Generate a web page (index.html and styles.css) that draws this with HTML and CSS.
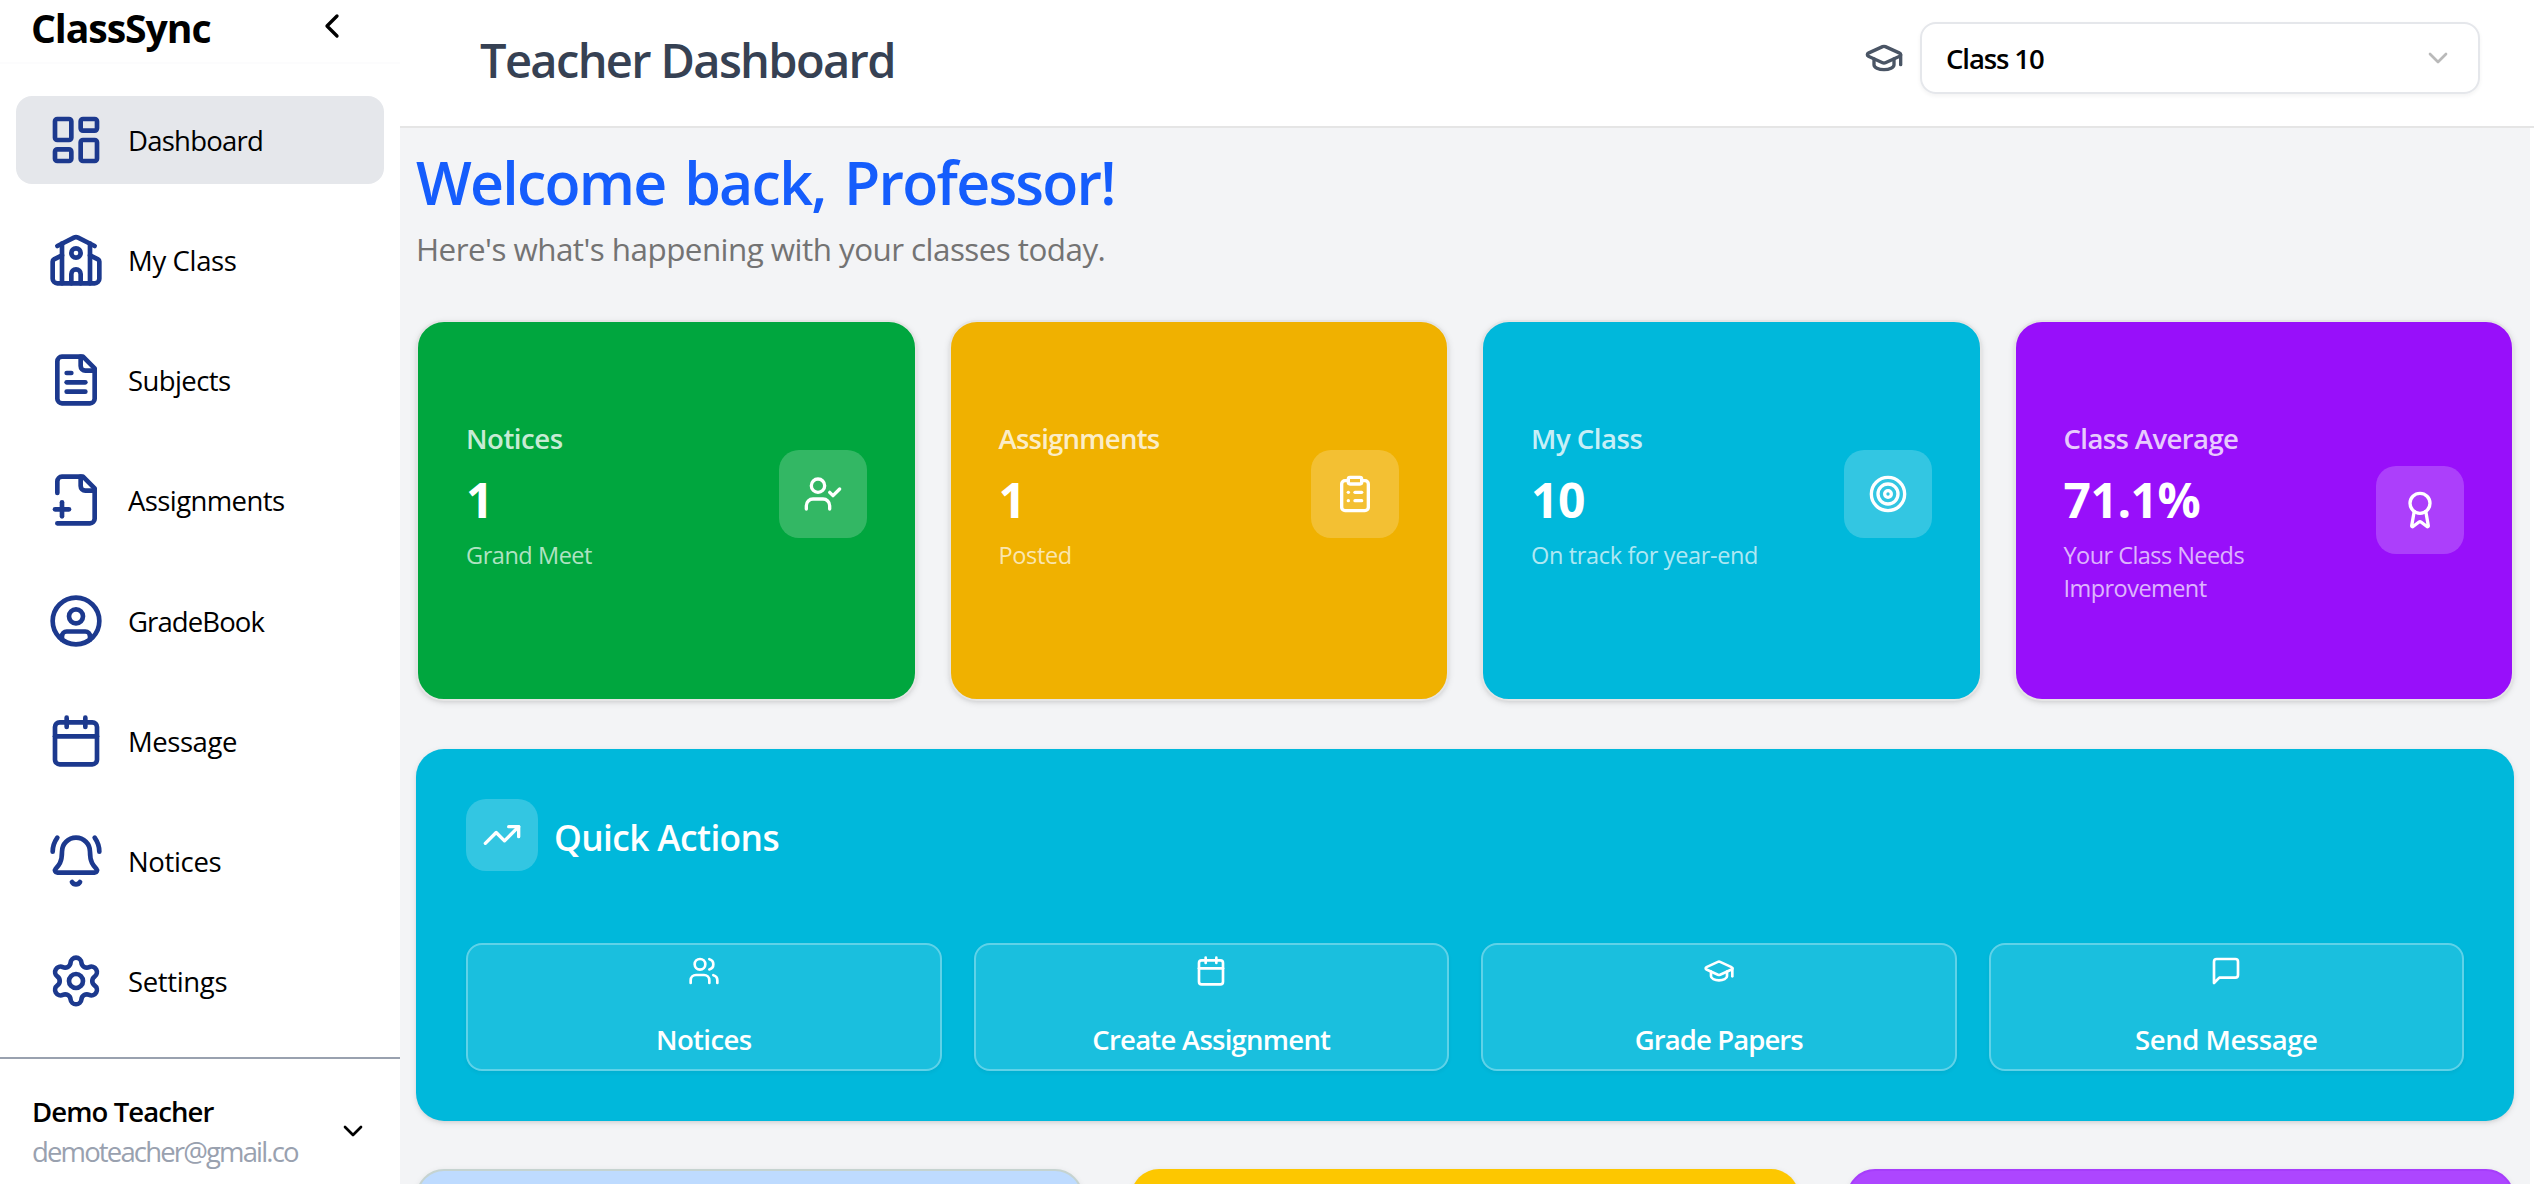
FILE: index.html
```
<!DOCTYPE html>
<html lang="en">
<head>
<meta charset="utf-8">
<title>ClassSync</title>
<link rel="stylesheet" href="styles.css">
</head>
<body>
<div class="app">
  <aside class="sidebar">
    <div class="brand">
      <span class="brand-name">ClassSync</span>
      <svg class="icon icon-40" viewBox="0 0 24 24"><path d="m15 18-6-6 6-6"/></svg>
    </div>
    <nav class="nav">
      <a class="nav-item active">
        <svg class="icon icon-56" viewBox="0 0 24 24"><rect width="7" height="9" x="3" y="3" rx="1"/><rect width="7" height="5" x="14" y="3" rx="1"/><rect width="7" height="9" x="14" y="12" rx="1"/><rect width="7" height="5" x="3" y="16" rx="1"/></svg>
        <span class="track-75">Dashboard</span>
      </a>
      <a class="nav-item">
        <svg class="icon icon-56" viewBox="0 0 24 24"><path d="M14 22v-4a2 2 0 1 0-4 0v4"/><path d="m18 10 3.447 1.724a1 1 0 0 1 .553.894V20a2 2 0 0 1-2 2H4a2 2 0 0 1-2-2v-7.382a1 1 0 0 1 .553-.894L6 10"/><path d="M18 5v17"/><path d="m4 6 7.106-3.553a2 2 0 0 1 1.788 0L20 6"/><path d="M6 5v17"/><circle cx="12" cy="9" r="2"/></svg>
        <span class="track-30">My Class</span>
      </a>
      <a class="nav-item">
        <svg class="icon icon-56" viewBox="0 0 24 24"><path d="M15 2H6a2 2 0 0 0-2 2v16a2 2 0 0 0 2 2h12a2 2 0 0 0 2-2V7Z"/><path d="M14 2v4a2 2 0 0 0 2 2h4"/><path d="M10 9H8"/><path d="M16 13H8"/><path d="M16 17H8"/></svg>
        <span class="track-60">Subjects</span>
      </a>
      <a class="nav-item">
        <svg class="icon icon-56" viewBox="0 0 24 24"><path d="M4 22h14a2 2 0 0 0 2-2V7l-5-5H6a2 2 0 0 0-2 2v5"/><path d="M14 2v4a2 2 0 0 0 2 2h4"/><path d="M3 16h6"/><path d="M6 13v6"/></svg>
        <span class="track-60">Assignments</span>
      </a>
      <a class="nav-item">
        <svg class="icon icon-56" viewBox="0 0 24 24"><path d="M18 20v-1.500a2 2 0 0 0-2-2H8a2 2 0 0 0-2 2V20"/><circle cx="12" cy="10" r="3"/><circle cx="12" cy="12" r="10"/></svg>
        <span class="track-90">GradeBook</span>
      </a>
      <a class="nav-item">
        <svg class="icon icon-56" viewBox="0 0 24 24"><path d="M8 2v4"/><path d="M16 2v4"/><rect width="18" height="18" x="3" y="4" rx="2"/><path d="M3 10h18"/></svg>
        <span class="track-45">Message</span>
      </a>
      <a class="nav-item">
        <svg class="icon icon-56" viewBox="0 0 24 24"><path d="M10.268 21a2 2 0 0 0 3.464 0"/><path d="M22 8c0-2.300-.8-4.300-2-6"/><path d="M3.262 15.326A1 1 0 0 0 4 17h16a1 1 0 0 0 .74-1.673C19.410 13.956 18 12.499 18 8A6 6 0 0 0 6 8c0 4.499-1.411 5.956-2.738 7.326"/><path d="M4 2C2.800 3.700 2 5.700 2 8"/></svg>
        <span class="track-30">Notices</span>
      </a>
      <a class="nav-item">
        <svg class="icon icon-56" viewBox="0 0 24 24"><path d="M9.671 4.136a2.340 2.340 0 0 1 4.659 0 2.340 2.340 0 0 0 3.319 1.915 2.340 2.340 0 0 1 2.330 4.033 2.340 2.340 0 0 0 0 3.831 2.340 2.340 0 0 1-2.330 4.033 2.340 2.340 0 0 0-3.319 1.915 2.340 2.340 0 0 1-4.659 0 2.340 2.340 0 0 0-3.320-1.915 2.340 2.340 0 0 1-2.330-4.033 2.340 2.340 0 0 0 0-3.831A2.340 2.340 0 0 1 6.350 6.051a2.340 2.340 0 0 0 3.319-1.915"/><circle cx="12" cy="12" r="3"/></svg>
        <span class="track-30">Settings</span>
      </a>
    </nav>
    <div class="account">
      <div class="account-text">
        <span class="account-name">Demo Teacher</span>
        <span class="account-email">demoteacher@gmail.co</span>
      </div>
      <svg class="icon icon-32" viewBox="0 0 24 24"><path d="m6 9 6 6 6-6"/></svg>
    </div>
  </aside>

  <div class="page">
    <header class="topbar">
      <h1 class="topbar-title">Teacher Dashboard</h1>
      <div class="class-picker">
        <svg class="icon icon-40 cap" viewBox="0 0 24 24"><path d="M21.420 10.922a1 1 0 0 0-.019-1.838L12.830 5.180a2 2 0 0 0-1.660 0L2.600 9.080a1 1 0 0 0 0 1.832l8.570 3.908a2 2 0 0 0 1.660 0z"/><path d="M22 10v6"/><path d="M6 12.500V16a6 3 0 0 0 12 0v-3.500"/></svg>
        <div class="select">
          <span class="select-value">Class 10</span>
          <svg class="icon icon-32 select-arrow" viewBox="0 0 24 24"><path d="m6 9 6 6 6-6"/></svg>
        </div>
      </div>
    </header>

    <main class="content">
      <h2 class="welcome">Welcome back, Professor!</h2>
      <p class="subtitle">Here's what's happening with your classes today.</p>

      <section class="stats">
        <article class="stat green">
          <div class="stat-text">
            <p class="stat-label track-45">Notices</p>
            <p class="stat-value">1</p>
            <p class="stat-note track-45">Grand Meet</p>
          </div>
          <div class="stat-icon"><svg class="icon icon-40" viewBox="0 0 24 24"><path d="m16 11 2 2 4-4"/><path d="M16 21v-2a4 4 0 0 0-4-4H6a4 4 0 0 0-4 4v2"/><circle cx="9" cy="7" r="4"/></svg></div>
        </article>
        <article class="stat yellow">
          <div class="stat-text">
            <p class="stat-label track-75">Assignments</p>
            <p class="stat-value">1</p>
            <p class="stat-note">Posted</p>
          </div>
          <div class="stat-icon"><svg class="icon icon-40" viewBox="0 0 24 24"><rect width="8" height="4" x="8" y="2" rx="1"/><path d="M16 4h2a2 2 0 0 1 2 2v14a2 2 0 0 1-2 2H6a2 2 0 0 1-2-2V6a2 2 0 0 1 2-2h2"/><path d="M12 11h4"/><path d="M12 16h4"/><path d="M8 11h.01"/><path d="M8 16h.01"/></svg></div>
        </article>
        <article class="stat cyan">
          <div class="stat-text">
            <p class="stat-label track-45">My Class</p>
            <p class="stat-value">10</p>
            <p class="stat-note">On track for year-end</p>
          </div>
          <div class="stat-icon"><svg class="icon icon-40" viewBox="0 0 24 24"><circle cx="12" cy="12" r="10"/><circle cx="12" cy="12" r="6"/><circle cx="12" cy="12" r="2"/></svg></div>
        </article>
        <article class="stat purple">
          <div class="stat-text">
            <p class="stat-label track-60">Class Average</p>
            <p class="stat-value">71.1%</p>
            <p class="stat-note track-60">Your Class Needs<br>Improvement</p>
          </div>
          <div class="stat-icon"><svg class="icon icon-40" viewBox="0 0 24 24"><path d="m15.477 12.890 1.515 8.526a.5.500 0 0 1-.810.470l-3.580-2.687a1 1 0 0 0-1.197 0l-3.586 2.686a.5.500 0 0 1-.810-.469l1.514-8.526"/><circle cx="12" cy="8" r="6"/></svg></div>
        </article>
      </section>

      <section class="quick">
        <div class="quick-head">
          <div class="quick-badge"><svg class="icon icon-40" viewBox="0 0 24 24"><path d="M16 7h6v6"/><path d="m22 7-8.500 8.500-5-5L2 17"/></svg></div>
          <h3 class="quick-title">Quick Actions</h3>
        </div>
        <div class="quick-grid">
          <button class="action">
            <svg class="icon icon-32" viewBox="0 0 24 24"><path d="M16 21v-2a4 4 0 0 0-4-4H6a4 4 0 0 0-4 4v2"/><path d="M16 3.128a4 4 0 0 1 0 7.744"/><path d="M22 21v-2a4 4 0 0 0-3-3.870"/><circle cx="9" cy="7" r="4"/></svg>
            <span class="track-60">Notices</span>
          </button>
          <button class="action">
            <svg class="icon icon-32" viewBox="0 0 24 24"><path d="M8 2v4"/><path d="M16 2v4"/><rect width="18" height="18" x="3" y="4" rx="2"/><path d="M3 10h18"/></svg>
            <span class="track-75">Create Assignment</span>
          </button>
          <button class="action">
            <svg class="icon icon-32" viewBox="0 0 24 24"><path d="M21.420 10.922a1 1 0 0 0-.019-1.838L12.830 5.180a2 2 0 0 0-1.660 0L2.600 9.080a1 1 0 0 0 0 1.832l8.570 3.908a2 2 0 0 0 1.660 0z"/><path d="M22 10v6"/><path d="M6 12.500V16a6 3 0 0 0 12 0v-3.500"/></svg>
            <span class="track-90">Grade Papers</span>
          </button>
          <button class="action">
            <svg class="icon icon-32" viewBox="0 0 24 24"><path d="M21 15a2 2 0 0 1-2 2H7l-4 4V5a2 2 0 0 1 2-2h14a2 2 0 0 1 2 2z"/></svg>
            <span class="track-45">Send Message</span>
          </button>
        </div>
      </section>

      <section class="panels">
        <div class="panel panel-blue"></div>
        <div class="panel panel-yellow"></div>
        <div class="panel panel-purple"></div>
      </section>
    </main>
  </div>
</div>
</body>
</html>
```
FILE: styles.css
```
* { box-sizing: border-box; margin: 0; padding: 0; }

body {
  height: 1184px;
  overflow: hidden;
  background: #fff;
  color: #000;
  font-family: "Open Sans", "Noto Sans", sans-serif;
  font-size: 27.5px;
  line-height: 40px;
}

.app { display: flex; height: 1184px; }

.icon {
  display: block;
  flex: none;
  fill: none;
  stroke: currentColor;
  stroke-width: 2;
  stroke-linecap: round;
  stroke-linejoin: round;
}
.icon-32 { width: 32px; height: 32px; }
.icon-40 { width: 40px; height: 40px; }
.icon-56 { width: 56px; height: 56px; }

.track-30 { letter-spacing: -0.35px; }
.track-45 { letter-spacing: -0.45px; }
.track-60 { letter-spacing: -0.6px; }
.track-75 { letter-spacing: -0.75px; }
.track-90 { letter-spacing: -0.9px; }

/* Sidebar */
.sidebar { flex: none; width: 400px; background: #fff; }
.brand {
  display: flex;
  align-items: center;
  justify-content: space-between;
  height: 64px;
  padding: 0 48px 10px 31px;
  border-bottom: 2px solid #fcfcfd;
}
.brand-name { margin-top: 3px; font-size: 39.2px; font-weight: 700; letter-spacing: -1.1px; line-height: 50px; }
.nav { display: flex; flex-direction: column; gap: 32.15px; padding: 32px 16px; }
.nav-item {
  display: flex;
  align-items: center;
  gap: 24px;
  height: 88px;
  padding: 0 32px;
  border-radius: 16px;
}
.nav-item.active { background: #e5e7eb; }
.nav-item .icon { color: #1c398e; }
.nav-item span { margin-top: 2px; }
.account {
  display: flex;
  align-items: flex-start;
  justify-content: space-between;
  padding: 33px 32px 0;
  border-top: 2px solid #99a1af;
}
.account .icon { margin: 23px -1px 0 0; }
.account-text { display: flex; flex-direction: column; }
.account-name { font-weight: 600; letter-spacing: -0.9px; }
.account-email { color: #99a1af; letter-spacing: -1.85px; }

/* Top bar */
.page { flex: 1; min-width: 0; display: flex; flex-direction: column; }
.topbar {
  flex: none;
  display: flex;
  align-items: center;
  justify-content: space-between;
  height: 128px;
  padding: 0 54px 10px 80px;
  border-bottom: 2px solid #e5e5e5;
}
.topbar-title {
  margin-top: 4px;
  color: #364153;
  font-size: 47px;
  font-weight: 600;
  letter-spacing: -1.65px;
  line-height: 64px;
}
.class-picker { display: flex; align-items: center; gap: 16px; }
.cap { color: #4a5565; }
.select {
  display: flex;
  align-items: center;
  justify-content: space-between;
  width: 560px;
  height: 72px;
  padding: 0 24px;
  border: 2px solid #e5e7eb;
  border-radius: 16px;
  font-weight: 600;
  box-shadow: 0 2px 4px rgba(0, 0, 0, 0.05);
}
.select-value { margin-top: 2px; letter-spacing: -1.1px; }
.select-arrow { color: #b9b9b9; }

/* Content */
.content {
  flex: 1;
  min-height: 0;
  overflow: hidden;
  margin-right: 4px;
  padding: 16px 16px 0;
  background: #f3f4f6;
}
.welcome {
  color: #155dfc;
  font-size: 59px;
  font-weight: 600;
  letter-spacing: -1.75px;
  word-spacing: 5px;
  line-height: 76px;
}
.subtitle {
  margin: 7px 0 49px;
  color: #737373;
  font-size: 31.4px;
  letter-spacing: -0.54px;
  line-height: 44px;
}

.stats { display: grid; grid-template-columns: repeat(4, 1fr); gap: 32px; }
.stat {
  display: flex;
  align-items: flex-start;
  justify-content: space-between;
  height: 381px;
  padding: 96px 48px;
  border: 2px solid #e5e5e5;
  border-radius: 28px;
  color: #fff;
  box-shadow: 0 2px 6px rgba(0, 0, 0, 0.1), 0 2px 4px -2px rgba(0, 0, 0, 0.1);
}
.stat-text { display: flex; flex-direction: column; padding-top: 1px; }
.stat-label { color: rgba(255, 255, 255, 0.8); font-weight: 600; }
.stat-value { margin-top: 9px; font-size: 48px; font-weight: 700; letter-spacing: -0.5px; line-height: 64px; }
.stat-note { margin-top: 7px; color: rgba(255, 255, 255, 0.7); font-size: 23.5px; line-height: 32.5px; }
.stat-note { letter-spacing: -0.35px; }
.stat-note.track-45 { letter-spacing: -0.45px; }
.stat-note.track-60 { letter-spacing: -0.55px; }
.stat-icon {
  display: flex;
  margin-top: 32px;
  padding: 24px;
  border-radius: 20px;
  background: rgba(255, 255, 255, 0.2);
}
.purple .stat-icon { margin-top: 48px; }
.green { background: #00a63e; }
.yellow { background: #f0b100; }
.cyan { background: #00b8db; }
.purple { background: #980ffa; }

.quick {
  height: 372px;
  margin-top: 48px;
  padding: 50px;
  border-radius: 28px;
  background: #00b8db;
  color: #fff;
  box-shadow: 0 2px 6px rgba(0, 0, 0, 0.1), 0 2px 4px -2px rgba(0, 0, 0, 0.1);
}
.quick-head { display: flex; align-items: center; gap: 16px; margin-bottom: 72px; }
.quick-badge {
  display: flex;
  padding: 16px;
  border-radius: 20px;
  background: rgba(255, 255, 255, 0.2);
}
.quick-title { margin-top: 3px; font-size: 35.3px; font-weight: 600; letter-spacing: -0.6px; line-height: 48px; }
.quick-grid { display: grid; grid-template-columns: repeat(4, 1fr); gap: 32px; }
.action {
  display: flex;
  flex-direction: column;
  align-items: center;
  justify-content: space-between;
  height: 128px;
  padding: 10px 0 9px;
  border: 2px solid rgba(255, 255, 255, 0.3);
  border-radius: 16px;
  background: rgba(255, 255, 255, 0.1);
  color: #fff;
  font: 600 27.5px/40px "Open Sans", "Noto Sans", sans-serif;
  box-shadow: 0 2px 4px rgba(0, 0, 0, 0.05);
}

.panels { display: grid; grid-template-columns: repeat(3, 1fr); gap: 48px; margin-top: 48px; }
.panel {
  height: 320px;
  border: 2px solid transparent;
  border-radius: 28px;
  box-shadow: 0 2px 6px rgba(0, 0, 0, 0.1), 0 2px 4px -2px rgba(0, 0, 0, 0.1);
}
.panel-blue { background-color: #bedbff; border-color: #c5d3d0; }
.panel-yellow { background-color: #fdc700; }
.panel-purple { background-color: #ad46ff; border-color: #a63dfb; }
```
